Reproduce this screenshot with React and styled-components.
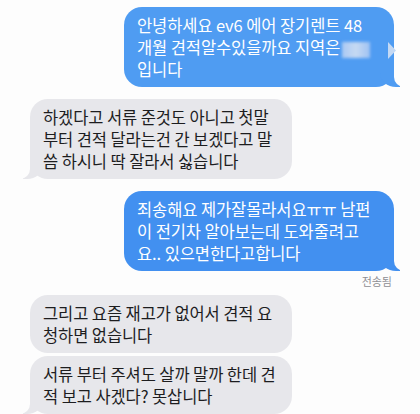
import React from 'react'
import styled, { createGlobalStyle, css } from 'styled-components'

const Global = createGlobalStyle`
  html, body {
    margin: 0;
    padding: 0;
    background: #fdfdfd;
  }
  body {
    font-family: "Noto Sans CJK KR", "Noto Sans", sans-serif;
  }
`

const Thread = styled.div`
  width: 420px;
  height: 414px;
  overflow: hidden;
  box-sizing: border-box;
  padding: 7px 26px 0 30px;
  display: flex;
  flex-direction: column;
`

const Row = styled.div`
  display: flex;
  justify-content: ${p => (p.$me ? 'flex-end' : 'flex-start')};
  margin-top: ${p => p.$gap || 0}px;
`

const Bubble = styled.div`
  position: relative;
  box-sizing: border-box;
  width: ${p => (p.$me ? 270 : 262)}px;
  padding: 7px 8px 7px 13px;
  border-radius: 18px;
  font-size: 16.5px;
  line-height: 22px;
  letter-spacing: -0.1px;
  white-space: nowrap;
  background: ${p => p.$bg || (p.$me ? '#4f9cf2' : '#e7e7eb')};
  color: ${p => (p.$me ? '#ffffff' : '#1d1d1f')};

  ${p => p.$tail && p.$me && css`
    &::before {
      content: "";
      position: absolute;
      bottom: 0;
      right: -6px;
      width: 20px;
      height: 20px;
      background: ${p.$bg || '#4f9cf2'};
      border-bottom-left-radius: 16px 14px;
    }
    &::after {
      content: "";
      position: absolute;
      bottom: 0;
      right: -26px;
      width: 26px;
      height: 20px;
      background: #fdfdfd;
      border-bottom-left-radius: 10px;
    }
  `}

  ${p => p.$tail && !p.$me && css`
    &::before {
      content: "";
      position: absolute;
      bottom: 0;
      left: -7px;
      width: 20px;
      height: 20px;
      background: #e7e7eb;
      border-bottom-right-radius: 16px 14px;
    }
    &::after {
      content: "";
      position: absolute;
      bottom: 0;
      left: -26px;
      width: 26px;
      height: 20px;
      background: #fdfdfd;
      border-bottom-right-radius: 10px;
    }
  `}
`

const Mosaic = styled.span`
  display: inline-block;
  vertical-align: middle;
  width: 28px;
  height: 16px;
  margin-left: 2px;
  background: linear-gradient(90deg, #a9c9f3 0%, #c6d9f2 50%, #9fc2f2 100%);
  filter: blur(1.5px);
`

/* blurred leftover of the censor patch, sitting over the bubble edge */
const Nub = styled.span`
  position: absolute;
  top: 35px;
  right: -2px;
  width: 8px;
  height: 17px;
  background: #c4d9f4;
  clip-path: polygon(0 0, 100% 50%, 0 100%);
  z-index: 2;
`

const Status = styled.div`
  align-self: flex-end;
  margin-top: 4px;
  padding-right: 2px;
  font-size: 11px;
  line-height: 12px;
  color: #8e8e93;
`

export default function App() {
  return (
    <>
      <Global />
      <Thread>
        <Row $me>
          <Bubble $me $tail>
            안녕하세요 ev6 에어 장기렌트 48<br />
            개월 견적알수있을까요 지역은<Mosaic /><br />
            입니다
            <Nub />
          </Bubble>
        </Row>
        <Row $gap={12}>
          <Bubble $tail>
            하겠다고 서류 준것도 아니고 첫말<br />
            부터 견적 달라는건 간 보겠다고 말<br />
            씀 하시니 딱 잘라서 싫습니다
          </Bubble>
        </Row>
        <Row $me $gap={12}>
          <Bubble $me $tail $bg="#4290f0">
            죄송해요 제가잘몰라서요ㅠㅠ 남편<br />
            이 전기차 알아보는데 도와줄려고<br />
            요.. 있으면한다고합니다
          </Bubble>
        </Row>
        <Status>전송됨</Status>
        <Row $gap={8}>
          <Bubble>
            그리고 요즘 재고가 없어서 견적 요<br />
            청하면 없습니다
          </Bubble>
        </Row>
        <Row $gap={3}>
          <Bubble $tail>
            서류 부터 주셔도 살까 말까 한데 견<br />
            적 보고 사겠다? 못삽니다
          </Bubble>
        </Row>
      </Thread>
    </>
  )
}
